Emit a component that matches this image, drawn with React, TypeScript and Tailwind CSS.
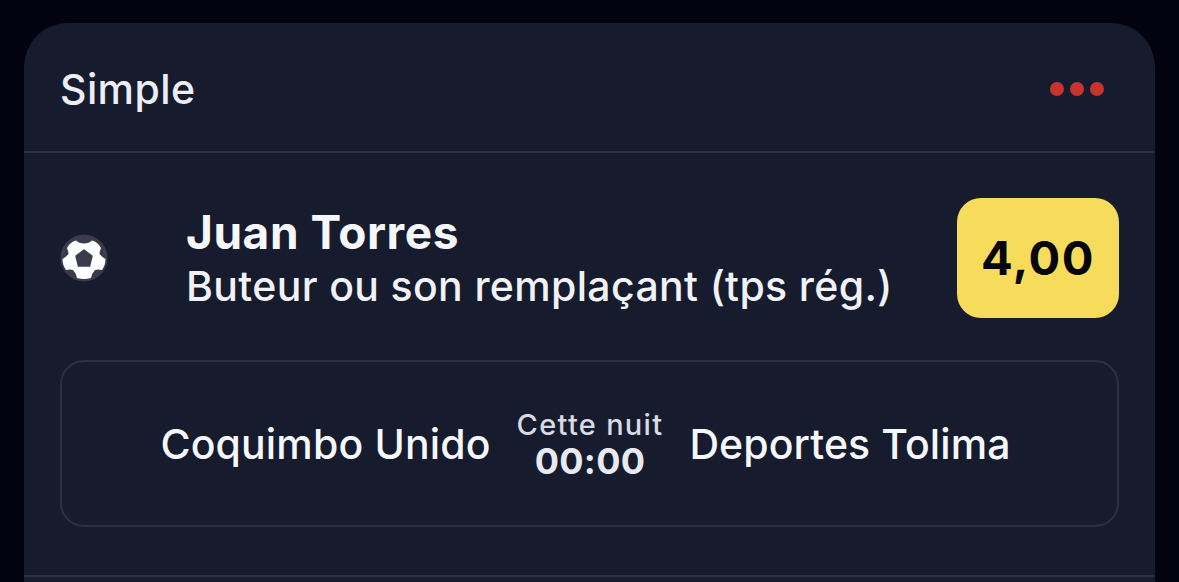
export default function App() {
  return (
    <div className="h-[582px] w-[1179px] overflow-hidden bg-[#03030f] pt-[23px] pl-6 pr-6 font-['Inter',sans-serif]">
      <div className="h-[600px] rounded-t-[44px] bg-[#171b2e]">
        {/* header */}
        <div className="flex h-[130px] items-center justify-between border-b-2 border-[#2c3042] pt-[5px] pl-[36px] pr-[51px]">
          <span className="text-[41px] font-[450] leading-none tracking-[0.4px] text-[#eceef3]">Simple</span>
          <div className="flex gap-[6px] pb-[2px]">
            <div className="h-[14px] w-[14px] rounded-full bg-[#c9332f]" />
            <div className="h-[14px] w-[14px] rounded-full bg-[#c9332f]" />
            <div className="h-[14px] w-[14px] rounded-full bg-[#c9332f]" />
          </div>
        </div>

        {/* selection */}
        <div className="flex items-center pt-[45px] pl-[36px] pr-[36px]">
          <svg width="48" height="48" viewBox="0 0 48 48" className="shrink-0">
            <circle cx="24" cy="24" r="23.5" fill="#3a3c4b" />
            <path
              fill="#ffffff"
              d="M24 9.5 Q29 9.5 32 6.5 Q38 8 41 14 Q39.5 17 39.5 20 Q42 23 45.5 25 Q45.5 31 42 36 Q38 35 35 36 Q32 39 31 44 Q24 46 17 44 Q16 39 13 36 Q10 35 6 36 Q2.5 31 2.5 25 Q6 23 8.5 20 Q8.5 17 7 14 Q10 8 16 6.5 Q19 9.5 24 9.5 Z"
            />
            <path
              fill="#3a3c4b"
              stroke="#3a3c4b"
              strokeWidth="1.5"
              strokeLinejoin="round"
              d="M24 16 L32 22 L29.5 32 L18.5 32 L16 22 Z"
            />
          </svg>
          <div className="ml-[78px] flex-1">
            <div className="pt-[1px] text-[46px] font-bold leading-[54px] tracking-[0.55px] text-[#f6f7fa]">Juan Torres</div>
            <div className="text-[41px] font-[450] leading-[54px] tracking-[0.35px] text-[#f1f2f6]">Buteur ou son remplaçant (tps rég.)</div>
          </div>
          <div className="flex h-[120px] w-[162px] shrink-0 items-center justify-center rounded-[24px] bg-[#f7dc5b]">
            <span className="text-[47px] font-bold tracking-[1.5px] text-[#05060c]">4,00</span>
          </div>
        </div>

        {/* match */}
        <div className="mx-[36px] mt-[42px] flex h-[167px] items-center justify-center gap-[26px] rounded-[24px] border-2 border-[#2c3042] pt-[3px] pr-[8px]">
          <span className="text-[41px] font-[450] tracking-[0.15px] text-[#f6f7fa]">Coquimbo Unido</span>
          <div className="flex flex-col items-center">
            <span className="text-[29px] font-[450] leading-[32px] tracking-[1.3px] text-[#d9dbe3]">Cette nuit</span>
            <span className="text-[36px] font-bold leading-[40px] tracking-[0.3px] text-[#e8eaf0]">00:00</span>
          </div>
          <span className="text-[41px] font-[450] tracking-[0.1px] text-[#f6f7fa]">Deportes Tolima</span>
        </div>

        <div className="mt-[48px] border-b-2 border-[#2c3042]" />
      </div>
    </div>
  );
}
